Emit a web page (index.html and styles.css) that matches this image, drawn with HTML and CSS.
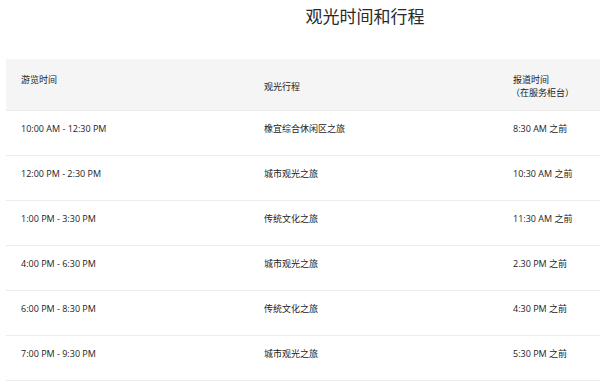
FILE: index.html
```html
<!DOCTYPE html>
<html lang="zh-CN">
<head>
<meta charset="utf-8">
<title>观光时间和行程</title>
<link rel="stylesheet" href="styles.css">
</head>
<body>
<h1 class="title">观光时间和行程</h1>
<table class="schedule">
  <colgroup>
    <col class="c1"><col class="c2"><col class="c3">
  </colgroup>
  <thead>
    <tr>
      <th class="top">游览时间</th>
      <th class="mid">观光行程</th>
      <th class="top">报道时间<br><span class="sub">（在服务柜台）</span></th>
    </tr>
  </thead>
  <tbody>
    <tr><td>10:00 AM - 12:30 PM</td><td>橡宜综合休闲区之旅</td><td>8:30 AM 之前</td></tr>
    <tr><td>12:00 PM - 2:30 PM</td><td>城市观光之旅</td><td>10:30 AM 之前</td></tr>
    <tr><td>1:00 PM - 3:30 PM</td><td>传统文化之旅</td><td>11:30 AM 之前</td></tr>
    <tr><td>4:00 PM - 6:30 PM</td><td>城市观光之旅</td><td>2.30 PM 之前</td></tr>
    <tr><td>6:00 PM - 8:30 PM</td><td>传统文化之旅</td><td>4:30 PM 之前</td></tr>
    <tr><td>7:00 PM - 9:30 PM</td><td>城市观光之旅</td><td>5:30 PM 之前</td></tr>
  </tbody>
</table>
</body>
</html>
```
FILE: styles.css
```css
html, body {
  margin: 0;
  padding: 0;
  background: #ffffff;
  overflow: hidden;
}
body {
  font-family: "Open Sans", "Noto Sans CJK SC", sans-serif;
  color: #222222;
}
.title {
  margin: 0;
  padding: 7px 0 0 130px;
  height: 59px;
  box-sizing: border-box;
  text-align: center;
  font-size: 17px;
  line-height: 20px;
  font-weight: 400;
  color: #2a2a2a;
}
.schedule {
  margin-left: 6px;
  width: 594px;
  border-collapse: collapse;
  table-layout: fixed;
  font-size: 9px;
  line-height: 13px;
}
.c1 { width: 243px; }
.c2 { width: 249px; }
.c3 { width: 102px; }
.schedule thead tr {
  background: #f5f5f5;
}
.schedule th {
  font-weight: 400;
  text-align: left;
  padding: 14px 0 11px 15px;
  height: 26px;
  white-space: nowrap;
}
.schedule th.top { vertical-align: top; }
.schedule th.mid { vertical-align: middle; }
.schedule .sub { margin-left: -2px; }
.schedule td {
  border-top: 1px solid #ececec;
  padding: 11px 0 20px 15px;
  vertical-align: top;
  white-space: nowrap;
}
.schedule tbody tr:last-child td {
  border-bottom: 1px solid #ececec;
}
```
